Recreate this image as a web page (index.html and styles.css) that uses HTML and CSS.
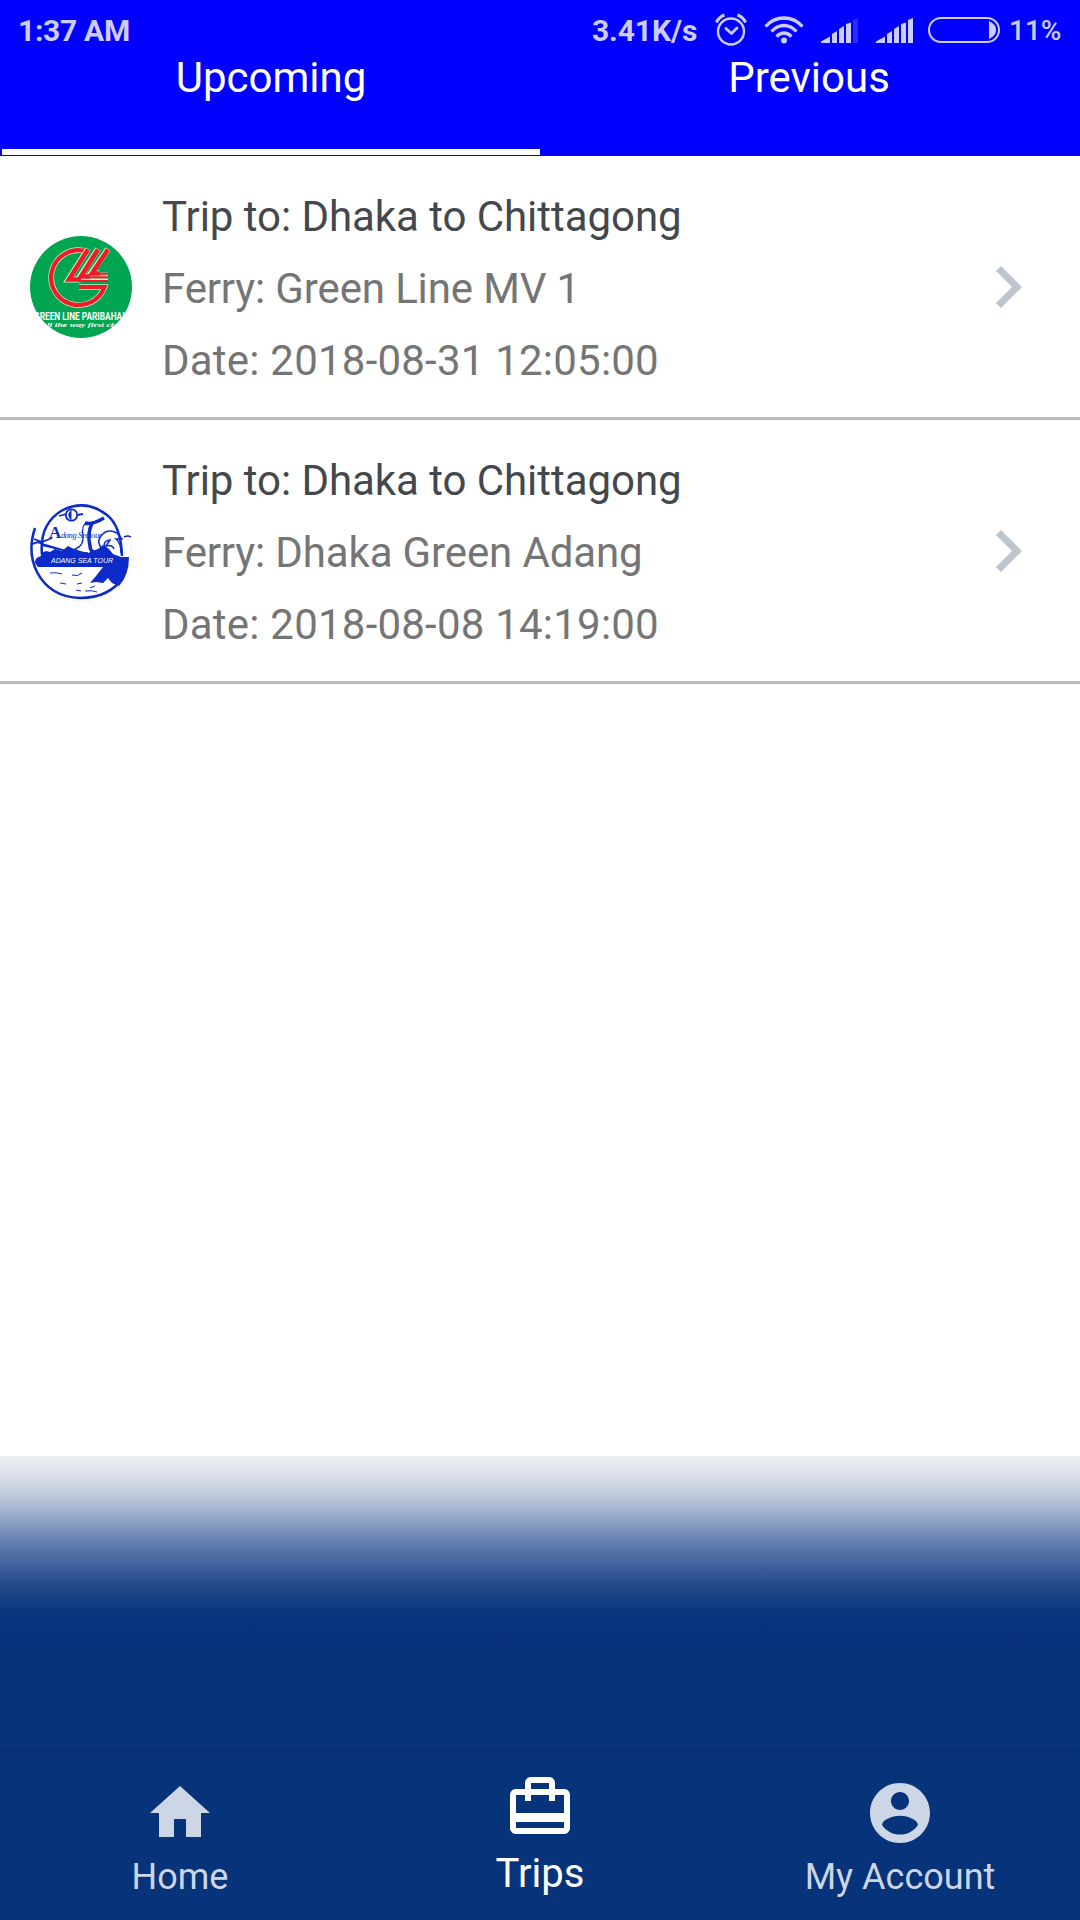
FILE: index.html
```
<!DOCTYPE html>
<html lang="en">
<head>
<meta charset="utf-8">
<title>Trips</title>
<link rel="stylesheet" href="styles.css">
</head>
<body>
<div class="app">
  <header class="header">
    <div class="status">
      <span class="clock">1:37 AM</span>
      <span class="speed">3.41K/s</span>
      <svg class="alarm" width="32" height="34" viewBox="0 0 32 34" fill="none" stroke="currentColor">
        <circle cx="16" cy="18.500" r="13" stroke-width="2.400"/>
        <path d="M11 15.500l5.500 5 5.500-5.500" stroke-width="2.800" stroke-linecap="round" stroke-linejoin="round"/>
        <path d="M1.300 9.500Q4 4 9.500 2M30.700 9.500Q28 4 22.500 2" stroke-width="3"/>
      </svg>
      <svg class="wifi" width="40" height="28" viewBox="0 0 40 28" fill="none" stroke="currentColor" stroke-width="3.300">
        <path d="M1.500 10.500Q9 2 20 2T38.500 10.500M7.500 15.500Q13 9.500 20 9.500T32.500 15.500M12.500 20.500Q16 17 20 17T27.500 20.500"/>
        <circle cx="20" cy="24.500" r="3" fill="currentColor" stroke="none"/>
      </svg>
      <svg class="signal" width="37" height="25" viewBox="0 0 37 25" fill="currentColor">
        <path d="M0 25v-1.500l9-5V25zM11 25v-9l5-3v12zM18 25V11l5-3v17zM25 25V6l5-1.500V25z"/>
        <path class="dim" d="M32 25V2l5-2v25z"/>
      </svg>
      <svg class="signal2" width="37" height="25" viewBox="0 0 37 25" fill="currentColor">
        <path d="M0 25v-1.500l9-5V25zM11 25v-9l5-3v12zM18 25V11l5-3v17zM25 25V6l5-1.500V25zM32 25V2l5-2v25z"/>
      </svg>
      <svg class="battery" width="72" height="26" viewBox="0 0 72 26">
        <rect x="1" y="1" width="70" height="24" rx="12" fill="none" stroke="currentColor" stroke-width="2"/>
        <path d="M61 4q7 3 7 9t-7 9z" fill="currentColor"/>
      </svg>
      <span class="percent">11%</span>
    </div>
    <nav class="tabs">
      <div class="tab active"><span>Upcoming</span></div>
      <div class="tab"><span>Previous</span></div>
    </nav>
  </header>

  <main class="trips">
    <article class="trip">
      <svg class="logo" viewBox="0 0 102 102">
        <defs><clipPath id="disc"><circle cx="51" cy="51" r="51"/></clipPath></defs>
        <g clip-path="url(#disc)">
          <rect width="102" height="102" fill="#00a551"/>
          <g fill="none" stroke="#d9e8cf">
            <path d="M53 14.500A27.500 27.500 0 1 0 74.500 51H49" stroke-width="5.600"/>
            <path d="M58 13L38.500 43.500H51M68 13L50 40.500H60M78 13L61 37.500H70" stroke-width="6"/>
            <path d="M48 44.500H78M56 41.200H78M64 38H78" stroke-width="3"/>
          </g>
          <g fill="none" stroke="#ee1c25">
            <path d="M53 14.500A27.500 27.500 0 1 0 74.500 51H49" stroke-width="4.200"/>
            <path d="M58 13.500L39 43.500H51M68 13.500L51 40.500H60M78 13.500L62 37.500H70" stroke-width="4.600"/>
            <path d="M48 45H78M56 41.300H78M64 37.800H78" stroke-width="2"/>
          </g>
          <text class="brand" x="4" y="83.500" textLength="94" lengthAdjust="spacingAndGlyphs">GREEN LINE PARIBAHAN</text>
          <text class="slogan" x="12" y="90.500" textLength="84" lengthAdjust="spacingAndGlyphs">all the way first class</text>
        </g>
      </svg>
      <div class="details">
        <h2>Trip to: Dhaka to Chittagong</h2>
        <p class="ferry">Ferry: Green Line MV 1</p>
        <p class="date">Date: 2018-08-31 12:05:00</p>
      </div>
      <svg class="chevron" width="26" height="42" viewBox="0 0 26 42"><path d="M5 0l21 21L5 42l-5-5 16-16L0 5z" fill="#bdc6cf"/></svg>
    </article>

    <article class="trip">
      <svg class="logo" viewBox="0 0 102 102">
        <circle cx="51" cy="51" r="50.500" fill="#fff" stroke="#eee" stroke-width=".7"/>
        <g fill="#0c2bc8">
          <path d="M11 53L16 51L20 52L25 49L32 51L38 46L46 50L58 53L68 49L73 45L79 49L83 54L91 57L99 57Q99 75 89 86L82 83L78 78L73 83L66 82L60 83L66 76L73 67H8Q2 61 8 57Q12 57 11 53Z"/>
          <path d="M12 43L36 50L37 52L12 46z"/>
        </g>
        <g fill="none" stroke="#0c2bc8">
          <path d="M5 28Q-3 52 7 72Q20 97 50 98Q80 98 94 76" stroke-width="2.500"/>
          <path d="M12 55Q9 25 31 11Q55-2 77 15Q91 26 92 56" stroke-width="2.500"/>
          <path d="M4 39L12 42L22 38M3 44Q8 40 14 45" stroke-width="1.800"/>
          <path d="M29 16L36 14M47 15L53 14" stroke-width="1.800"/>
          <circle cx="41.500" cy="15" r="5.700" fill="#fff" stroke-width="1.800"/>
          <path d="M58 53Q50 53 45 49Q54 46 53 36Q51 24 58 22" stroke-width="1.300"/>
          <path d="M55 23Q62 25 74 18" stroke-width="3.500"/>
          <path d="M62 23Q57 34 60 46Q60 52 66 53" stroke-width="3.500"/>
          <path d="M72 49Q66 42 71 36Q77 28 87 33L92 39L86 39Q91 43 91 53M75 49Q72 41 80 40L76 46Q82 44 84 49" stroke-width="1.500"/>
          <path d="M94 37Q98 35 101 37" stroke-width="1.500"/>
          <path d="M20 73Q26 72 32 74M42 75Q48 77 52 73M30 83L36 84M47 84L52 83M46 90L51 91M60 88L65 86M55 91Q62 90 67 92" stroke-width="1"/>
        </g>
        <path d="M41.500 9.500Q35 15 41.500 20.500Z" fill="#0c2bc8"/>
        <text class="script" x="19" y="38"><tspan class="big">A</tspan><tspan>dang</tspan> <tspan>Seatour</tspan></text>
        <text class="tour" x="21" y="63" textLength="62" lengthAdjust="spacingAndGlyphs">ADANG SEA TOUR</text>
      </svg>
      <div class="details">
        <h2>Trip to: Dhaka to Chittagong</h2>
        <p class="ferry">Ferry: Dhaka Green Adang</p>
        <p class="date">Date: 2018-08-08 14:19:00</p>
      </div>
      <svg class="chevron" width="26" height="42" viewBox="0 0 26 42"><path d="M5 0l21 21L5 42l-5-5 16-16L0 5z" fill="#bdc6cf"/></svg>
    </article>
  </main>

  <footer class="footer">
    <nav class="bottom">
      <div class="item">
        <svg viewBox="0 0 24 24"><path d="M10 20v-6h4v6h5v-8h3L12 3 2 12h3v8z"/></svg>
        <span>Home</span>
      </div>
      <div class="item selected">
        <svg viewBox="0 0 24 24"><path d="M20 6h-3V4c0-1.110-.890-2-2-2H9c-1.110 0-2 .890-2 2v2H4c-1.110 0-2 .890-2 2v11c0 1.110.890 2 2 2h16c1.110 0 2-.890 2-2V8c0-1.110-.890-2-2-2zM9 4h6v2H9V4zm11 15H4v-2h16v2zm0-5H4V8h3v2h2V8h6v2h2V8h3v6z"/></svg>
        <span>Trips</span>
      </div>
      <div class="item">
        <svg viewBox="0 0 24 24"><path d="M12 2C6.480 2 2 6.480 2 12s4.480 10 10 10 10-4.480 10-10S17.520 2 12 2zm0 3c1.660 0 3 1.340 3 3s-1.340 3-3 3-3-1.340-3-3 1.340-3 3-3zm0 14.200c-2.500 0-4.710-1.280-6-3.220.030-1.990 4-3.080 6-3.080 1.990 0 5.970 1.090 6 3.080-1.290 1.940-3.500 3.220-6 3.220z"/></svg>
        <span>My Account</span>
      </div>
    </nav>
  </footer>
</div>
</body>
</html>
```
FILE: styles.css
```
* { box-sizing: border-box; }

body {
  margin: 0;
  font-family: Roboto, sans-serif;
  background: #fff;
}

.app {
  display: flex;
  flex-direction: column;
  width: 1080px;
  height: 1920px;
  overflow: hidden;
}

svg { display: block; flex: none; }

.header {
  display: flex;
  flex-direction: column;
  height: 156px;
  background: #00f;
  color: #fff;
}

.status {
  display: flex;
  height: 53px;
  padding: 13px 18px 0 18px;
  color: #ccccff;
  font-size: 30px;
  font-weight: 700;
  line-height: 36px;
  white-space: nowrap;
}

.clock { width: 574px; letter-spacing: -.3px; }
.speed { width: 123px; letter-spacing: -.1px; }
.alarm { margin-top: 0; }
.wifi { margin: 3px 0 0 17px; }
.signal { margin: 5px 0 0 17px; }
.signal2 { margin: 5px 0 0 18px; }
.battery { margin: 4px 0 0 15px; }
.percent { margin-left: 9px; font-size: 28px; font-weight: 500; }
.dim { opacity: .2; }

.tabs {
  display: grid;
  grid-template-columns: 1fr 1fr;
  flex: 1;
  padding-bottom: 1px;
}

.tab {
  display: flex;
  flex-direction: column;
  justify-content: space-between;
  align-items: center;
  padding-right: 2px;
  font-size: 42px;
  line-height: 49px;
}

.tab.active { padding: 0 0 0 2px; }

.tab.active::after {
  content: "";
  align-self: stretch;
  height: 6px;
  background: #fff;
}

.trips { flex: 1; }

.trip {
  display: flex;
  align-items: center;
  height: 264px;
  padding: 0 58px 0 30px;
  border-bottom: 3px solid #bbb;
}

.logo { width: 102px; height: 102px; }

.details {
  flex: 1;
  margin-left: 30px;
  padding-top: 4px;
  font-size: 42px;
  line-height: 72px;
  color: #757575;
  white-space: nowrap;
}

.details h2, .details p { margin: 0; font: inherit; }
.details h2 { color: #43484d; letter-spacing: -.05px; }
.details .ferry { letter-spacing: -.14px; }
.details .date { letter-spacing: .22px; }

.brand { font: 700 10px Roboto, sans-serif; fill: #fff; }
.slogan { font: italic 700 7px "Liberation Serif", serif; fill: #fff; }
.script { font: italic 8.500px "Liberation Serif", serif; fill: #0c2bc8; letter-spacing: -.4px; }
.big { font-size: 17px; font-weight: 700; font-style: normal; }
.tour { font: italic 6.500px "Liberation Sans", sans-serif; fill: #fff; }

.footer {
  height: 464px;
  padding-top: 294px;
  background: linear-gradient(#edf0f4 0, #dce1eb 18px, #c0cbdc 38px, #a1b0cf 56px, #7c92bc 74px, #5170a4 97px, #395a98 115px, #224784 131px, #0b3881 154px, #06317b 176px, #06337a 200px, #06337a 290px, #062f75 294px, #06337a 298px);
}

.bottom {
  display: grid;
  grid-template-columns: repeat(3, 360px);
}

.item {
  display: flex;
  flex-direction: column;
  align-items: center;
  padding-top: 27px;
  color: #cdd6e4;
  font-size: 36px;
  line-height: 42px;
}

.item svg { width: 72px; height: 72px; fill: currentColor; }
.item span { margin-top: 7px; }
.item.selected { padding-top: 21px; color: #fff; font-size: 40px; line-height: 46px; }
.item.selected span { margin-top: 8px; }
```
